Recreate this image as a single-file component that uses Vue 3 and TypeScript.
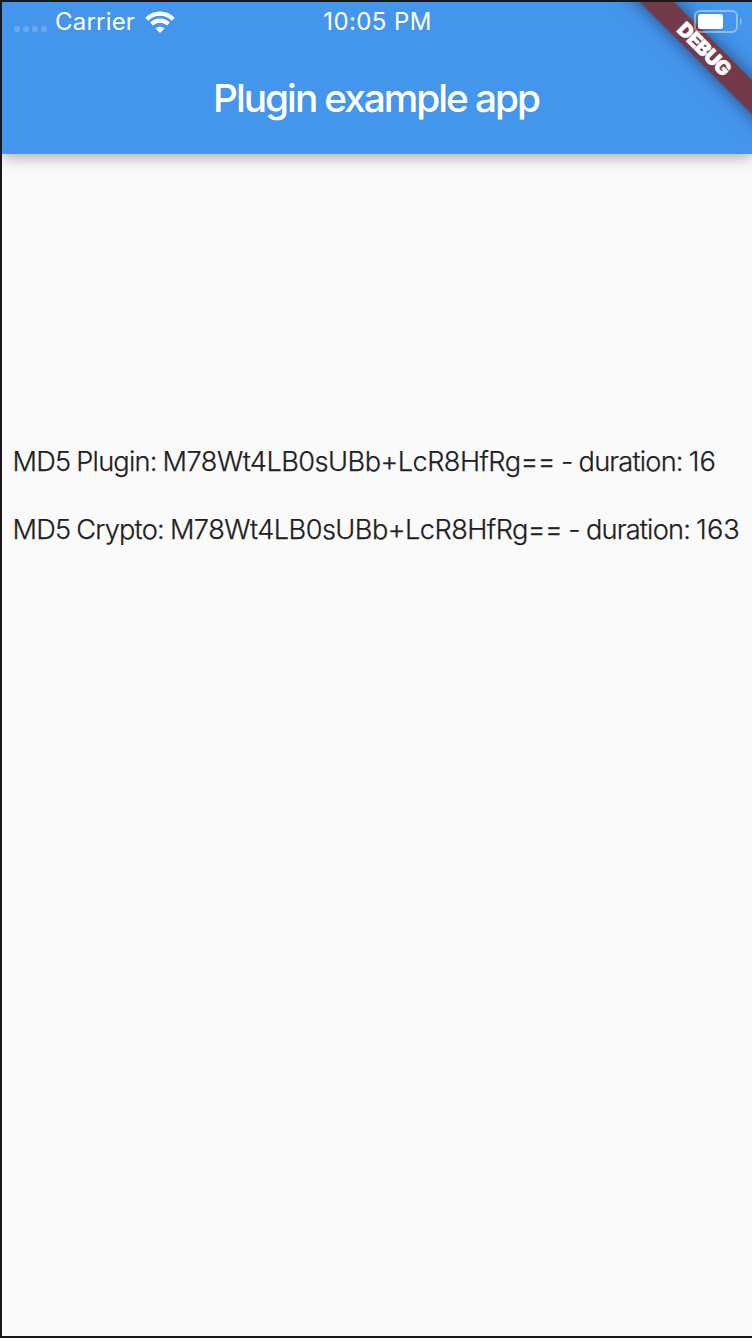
<script setup lang="ts">
interface DigestResult {
  method: string
  digest: string
  duration: number
}

const results: DigestResult[] = [
  { method: 'Plugin', digest: 'M78Wt4LB0sUBb+LcR8HfRg==', duration: 16 },
  { method: 'Crypto', digest: 'M78Wt4LB0sUBb+LcR8HfRg==', duration: 163 },
]
</script>

<template>
  <div class="screen">
    <header class="app-bar">
      <div class="status">
        <div class="status-left">
          <div class="signal"><i v-for="n in 4" :key="n"></i></div>
          <span class="carrier">Carrier</span>
          <svg class="wifi" width="30" height="22" viewBox="0 0 30 22">
            <g fill="none" stroke="#fff" stroke-width="4.2">
              <path d="M1.7 8.2C9.3.8 20.7.8 28.3 8.2" />
              <path d="M6.5 13C11.4 8.4 18.6 8.4 23.5 13" />
            </g>
            <path d="M10.6 17.4C13.2 15.1 16.8 15.1 19.4 17.4L15 22Z" fill="#fff" />
          </svg>
        </div>
        <span class="clock">10:05 PM</span>
      </div>
      <h1>Plugin example app</h1>
    </header>
    <main class="body">
      <p v-for="r in results" :key="r.method">MD5 {{ r.method }}: <span class="digest">{{ r.digest }}</span> - duration: <span class="duration">{{ r.duration }}</span></p>
    </main>
    <div class="corner">
      <div class="ribbon"><span>DEBUG</span></div>
    </div>
    <svg class="battery" width="50" height="24" viewBox="0 0 50 24">
      <rect x="1" y="1" width="42" height="21" rx="5" fill="none" stroke="#fff" stroke-opacity=".4" stroke-width="2" />
      <rect x="4" y="4" width="25" height="15" rx="2.5" fill="#fff" />
      <path d="M46 8C48.3 9 48.3 14 46 15Z" fill="#fff" fill-opacity=".4" />
    </svg>
  </div>
</template>

<style>
body {
  margin: 0;
}
</style>

<style scoped>
.screen {
  position: relative;
  box-sizing: border-box;
  width: 752px;
  height: 1338px;
  overflow: hidden;
  border: 2px solid #19171a;
  border-right: 0;
  background: #fafafa;
  font-family: Inter, "Liberation Sans", sans-serif;
}
.app-bar {
  box-sizing: border-box;
  height: 152px;
  background: #4495ec;
  color: #fff;
  box-shadow: 0 3px 14px rgba(0, 0, 0, 0.34);
}
.status {
  display: grid;
  grid-template-columns: 1fr auto 1fr;
  align-items: center;
  height: 40px;
  font-size: 24px;
  line-height: 40px;
}
.status-left {
  display: flex;
  align-items: center;
  padding-left: 12px;
}
.signal {
  display: flex;
  gap: 3px;
  padding-top: 14px;
}
.signal i {
  width: 6px;
  height: 6px;
  border-radius: 2px;
  background: rgba(255, 255, 255, 0.2);
}
.carrier {
  margin-left: 8px;
  width: 89.5px;
  letter-spacing: 0.2px;
}
.clock {
  padding-left: 1px;
  letter-spacing: 0.4px;
}
h1 {
  margin: 0;
  padding: 32px 2px 0 0;
  font-size: 38.8px;
  line-height: 48px;
  font-weight: 500;
  letter-spacing: -2px;
  word-spacing: -0.3px;
  text-align: center;
}
.body {
  padding: 291px 0 0 10.5px;
  color: #212121;
}
.body p {
  margin: 0 0 34px;
  font-size: 27.2px;
  line-height: 34px;
  font-weight: 350;
  letter-spacing: -0.8px;
  word-spacing: -0.8px;
  white-space: nowrap;
  -webkit-text-stroke: 0.25px #212121;
}
.digest {
  letter-spacing: -0.54px;
}
.duration {
  letter-spacing: 0.1px;
}
.corner {
  position: absolute;
  top: 0;
  right: 0;
  width: 160px;
  height: 160px;
  overflow: hidden;
}
.ribbon {
  position: absolute;
  left: 12px;
  top: 35px;
  width: 200px;
  height: 24px;
  transform: rotate(45deg);
  background: #733a49;
  box-shadow: 0 0 18px rgba(0, 0, 0, 0.5);
  color: #fff;
  font-size: 20px;
  line-height: 24px;
  font-weight: 900;
  text-align: center;
  letter-spacing: -0.8px;
}
.ribbon span {
  -webkit-text-stroke: 0.5px #fff;
}
.battery {
  position: absolute;
  left: 692px;
  top: 8px;
}
</style>
